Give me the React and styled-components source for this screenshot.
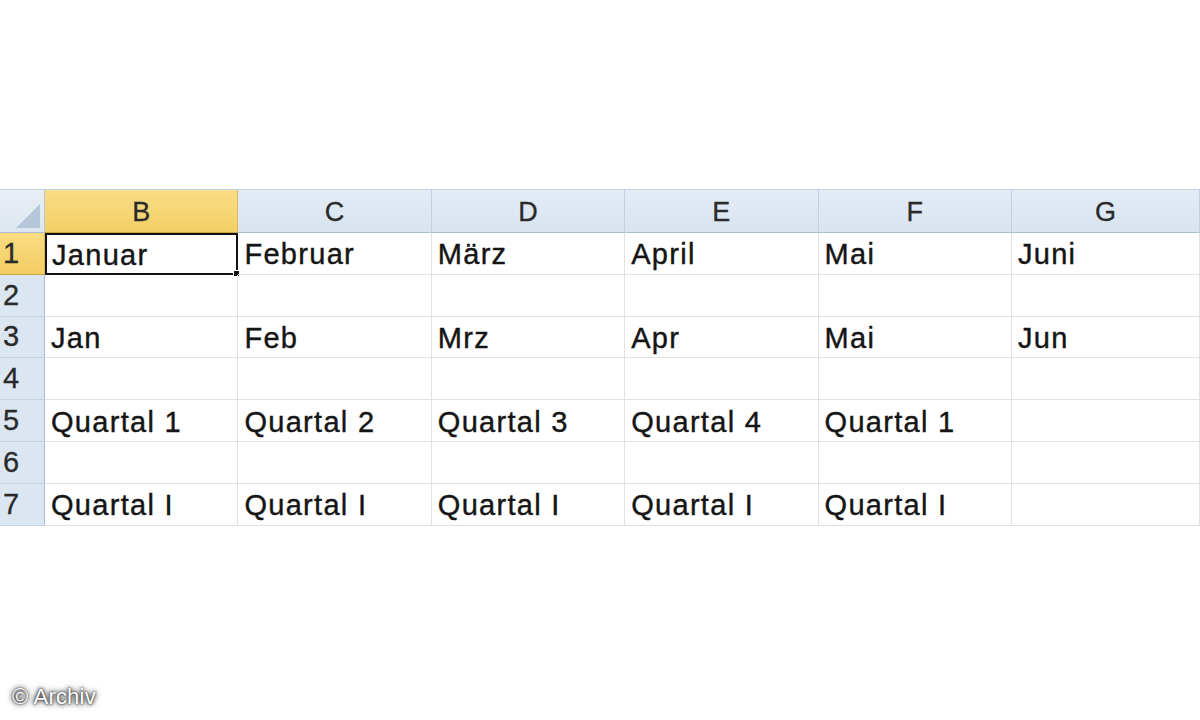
import React from 'react';
import styled, { createGlobalStyle } from 'styled-components';

const GlobalStyle = createGlobalStyle`
html, body {
  margin: 0;
  padding: 0;
  background: #ffffff;
}
body {
  font-family: "Liberation Sans", Arial, sans-serif;
}
`;

const columns = ['B', 'C', 'D', 'E', 'F', 'G'];

const rows = [
  ['Januar', 'Februar', 'März', 'April', 'Mai', 'Juni'],
  ['', '', '', '', '', ''],
  ['Jan', 'Feb', 'Mrz', 'Apr', 'Mai', 'Jun'],
  ['', '', '', '', '', ''],
  ['Quartal 1', 'Quartal 2', 'Quartal 3', 'Quartal 4', 'Quartal 1', ''],
  ['', '', '', '', '', ''],
  ['Quartal I', 'Quartal I', 'Quartal I', 'Quartal I', 'Quartal I', ''],
];

function App() {
  return (
    <Page>
      <GlobalStyle />
      <Sheet>
        <Corner>
          <CornerTriangle />
        </Corner>
        {columns.map((col, i) => (
          <ColHeader key={col} $active={i === 0}>{col}</ColHeader>
        ))}
        {rows.map((row, r) => (
          <React.Fragment key={r}>
            <RowHeader $active={r === 0}>{r + 1}</RowHeader>
            {row.map((val, c) => (
              <Cell key={c} $selected={r === 0 && c === 0}>
                {val}
                {r === 0 && c === 0 && <FillHandle />}
              </Cell>
            ))}
          </React.Fragment>
        ))}
      </Sheet>
      <Credit>© Archiv</Credit>
    </Page>
  );
}

const Page = styled.div`
position: relative;
width: 1200px;
height: 720px;
overflow: hidden;
padding-top: 189px;
box-sizing: border-box;
background: #fff;
`;

const Sheet = styled.div`
display: grid;
grid-template-columns: 45px repeat(5, 193.4px) 1fr;
grid-template-rows: 43px repeat(7, 41.8px);
width: 1200px;
border-top: 1px solid #c9d6e4;
`;

const HeaderBase = styled.div`
display: flex;
align-items: center;
box-sizing: border-box;
color: #2a2a2a;
font-size: 27px;
-webkit-text-stroke: 0.3px #2a2a2a;
`;

const Corner = styled(HeaderBase)`
position: relative;
background: linear-gradient(#e9eff6, #dde6f0);
border-right: 1px solid #b9c9da;
border-bottom: 1px solid #a9bdd2;
`;

const CornerTriangle = styled.div`
position: absolute;
right: 4px;
bottom: 4px;
width: 0;
height: 0;
border-left: 24px solid transparent;
border-bottom: 24px solid #b4c6da;
`;

const ColHeader = styled(HeaderBase)`
justify-content: center;
padding-top: 2px;
background: ${p => p.$active
  ? 'linear-gradient(#f9dd86, #f4cf66)'
  : 'linear-gradient(#e3ebf5, #d9e4f0)'};
border-right: 1px solid ${p => p.$active ? '#d8b85a' : '#c0d0e1'};
border-bottom: 1px solid ${p => p.$active ? '#c9a548' : '#a9bdd2'};
`;

const RowHeader = styled(HeaderBase)`
padding-left: 3px;
font-size: 29px;
background: ${p => p.$active
  ? 'linear-gradient(#f9dc82, #f4cd62)'
  : '#dce6f1'};
border-right: 1px solid ${p => p.$active ? '#d8b85a' : '#a9bdd2'};
border-bottom: 1px solid ${p => p.$active ? '#c9a548' : '#c3d2e2'};
`;

const Cell = styled.div`
position: relative;
display: flex;
align-items: center;
box-sizing: border-box;
padding: 3px 0 0 6px;
font-size: 29px;
letter-spacing: 1.3px;
color: #151515;
-webkit-text-stroke: 0.4px #151515;
white-space: nowrap;
border-right: 1px solid #dfe2e5;
border-bottom: 1px solid #dfe2e5;
${p => p.$selected && `
  border: 2px solid #111;
  padding-left: 5px;
`}
`;

const FillHandle = styled.span`
position: absolute;
right: -4px;
bottom: -4px;
width: 5px;
height: 5px;
background: #111;
border: 1px solid #fff;
`;

const Credit = styled.div`
position: absolute;
left: 12px;
bottom: 10px;
font-size: 22px;
letter-spacing: 0.2px;
color: #ffffff;
text-shadow: 0 0 2px #222, 0 0 4px #333, 0 0 7px #555;
`;

export default App;
